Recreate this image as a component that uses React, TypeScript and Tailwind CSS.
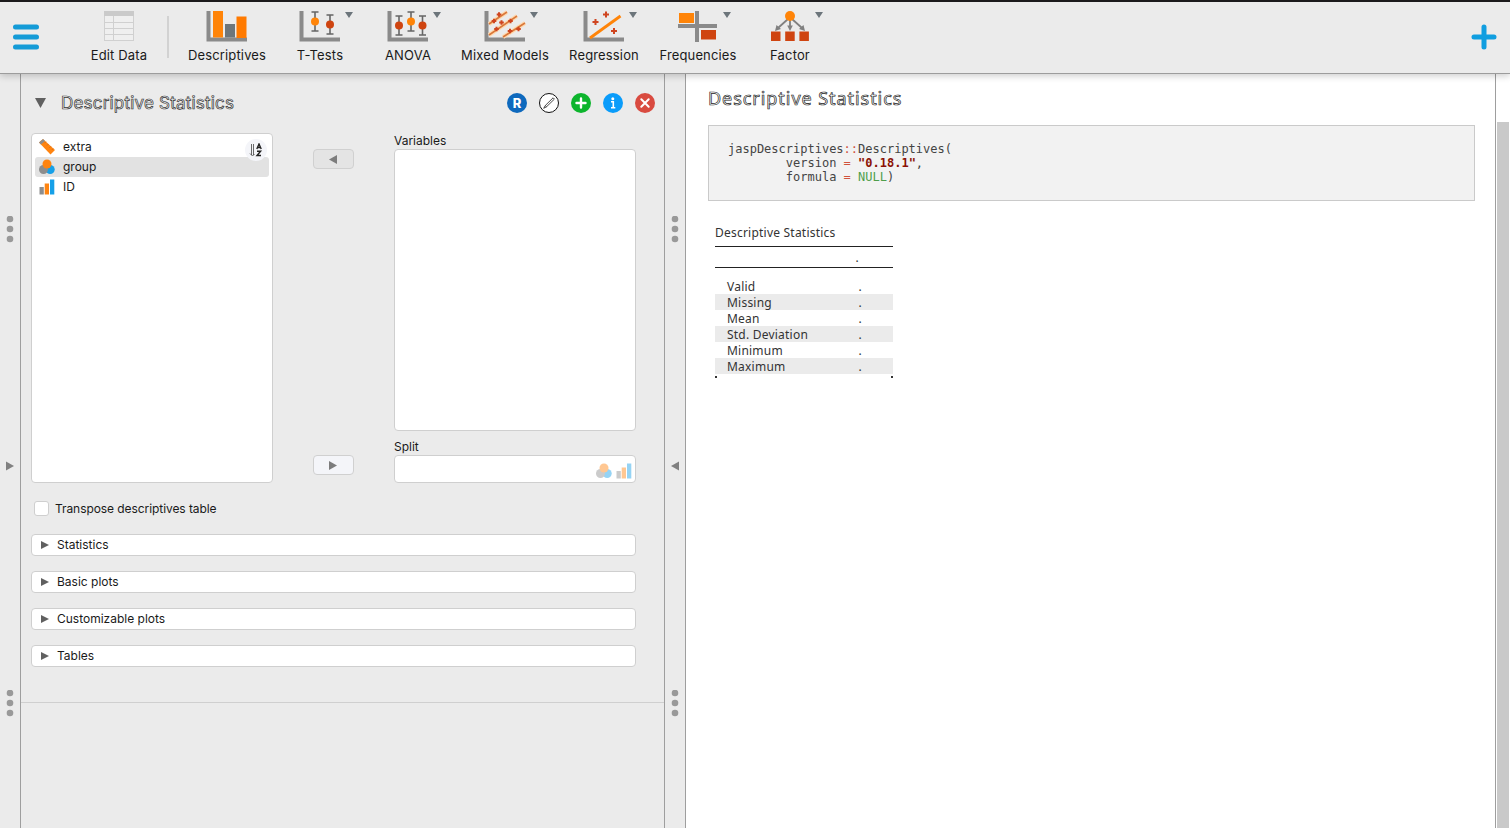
import React, { ReactNode } from "react";

const AXES = "M1.5 0V28.5H40";

function Axes({ children }: { children?: ReactNode }) {
  return (
    <svg width="40" height="31" viewBox="0 0 40 31" fill="none" className="overflow-visible">
      <path d={AXES} stroke="#8a8a8a" strokeWidth="4" />
      {children}
    </svg>
  );
}

function Whisker({ x, y, color }: { x: number; y: number; color: string }) {
  return (
    <g>
      <path d={`M${x} ${y - 9.5}V${y + 9.5}M${x - 3.5} ${y - 9.5}h7M${x - 3.5} ${y + 9.5}h7`} stroke="#666" strokeWidth="1.6" />
      <circle cx={x} cy={y} r="4" fill={color} />
    </g>
  );
}

function Plus({ x, y, r = 3 }: { x: number; y: number; r?: number }) {
  return <path d={`M${x - r} ${y}h${2 * r}M${x} ${y - r}v${2 * r}`} stroke="#cf4520" strokeWidth="2" />;
}

const RED = "#cf4410";
const ORANGE = "#ff8408";

function DescriptivesIcon() {
  return (
    <Axes>
      <rect x="6" y="0" width="10" height="26.5" fill={ORANGE} />
      <rect x="18" y="13" width="10" height="13.5" fill="#6d767b" />
      <rect x="29.5" y="5.5" width="10" height="21.5" fill="#ff7a00" />
    </Axes>
  );
}
function TTestIcon() {
  return (
    <Axes>
      <Whisker x={15} y={10.5} color={ORANGE} />
      <Whisker x={30} y={13.5} color={RED} />
    </Axes>
  );
}
function AnovaIcon() {
  return (
    <Axes>
      <Whisker x={11} y={14.5} color={RED} />
      <Whisker x={23} y={10.5} color={ORANGE} />
      <Whisker x={34.5} y={14.5} color={RED} />
    </Axes>
  );
}
function MixedIcon() {
  return (
    <Axes>
      <path d="M4 13L22 1M4 24L32 5M18 26L40 12" stroke="#ffd9b0" strokeWidth="4" />
      <path d="M4 13L22 1M4 24L32 5M18 26L40 12" stroke="#d9783a" strokeWidth="1.6" />
      <Plus x={14} y={3.5} r={2.3} />
      <Plus x={9} y={10} r={2.3} />
      <Plus x={16.5} y={11.5} r={2.3} />
      <Plus x={25.500} y={10} r={2.3} />
      <Plus x={11.5} y={18} r={2.3} />
      <Plus x={25} y={20} r={2.3} />
      <Plus x={33.500} y={18} r={2.3} />
    </Axes>
  );
}
function RegressionIcon() {
  return (
    <Axes>
      <path d="M6 27L36.500 5" stroke={ORANGE} strokeWidth="2.8" />
      <Plus x={11.500} y={11} />
      <Plus x={22} y={3.5} />
      <Plus x={30} y={20} />
    </Axes>
  );
}
function FrequenciesIcon() {
  return (
    <svg width="40" height="31" viewBox="0 0 40 31">
      <path d="M0 13h39v4H0zM17 0h4v31h-4z" fill="#8a8a8a" />
      <rect x="1" y="2" width="15" height="10" fill={ORANGE} />
      <rect x="23" y="19" width="15" height="9.500" fill={RED} />
    </svg>
  );
}
function FactorIcon() {
  return (
    <svg width="40" height="31" viewBox="0 0 40 31">
      <path d="M18 8L8 17M20 8v9M22 8l10 9" stroke="#808080" strokeWidth="1.8" />
      <path d="M5 20l1.500-6 4.500 4zM17.200 14.500h5.600L20 20zM35 20l-6-2 4.500-4z" fill="#808080" />
      <circle cx="20" cy="5" r="5" fill={ORANGE} />
      <path d="M1 20.500h9.500v9.500H1zM15.200 20.500h9.500v9.500h-9.500zM29.400 20.500h9.500v9.500h-9.500z" fill={RED} />
    </svg>
  );
}
function EditDataIcon() {
  return (
    <svg width="30" height="31" viewBox="0 0 30 31" fill="none">
      <rect x="0.5" y="0.5" width="29" height="29" fill="#efefef" stroke="#d0d0d0" />
      <rect width="30" height="5" fill="#cacaca" />
      <path d="M9.500 5v25M0 11.500h30M0 17.500h30M0 23.500h30" stroke="#d0d0d0" />
    </svg>
  );
}

function ToolItem({ icon, label, box, menu = true }: { icon: ReactNode; label: string; box: string; menu?: boolean }) {
  return (
    <div className={`relative flex shrink-0 flex-col items-center pt-[9px] ${box}`}>
      {icon}
      <span className="mt-[5px] text-[13px] leading-4 tracking-[0.15px] whitespace-nowrap">{label}</span>
      {menu && (
        <svg className="absolute top-[10px] left-[calc(50%+25px)]" width="8" height="6" viewBox="0 0 8 6">
          <path d="M0 0h8L4 6z" fill="#6c757b" />
        </svg>
      )}
    </div>
  );
}

function Toolbar() {
  return (
    <header className="relative z-10 flex h-[74px] shrink-0 border-t-2 border-b border-t-[#1b1a1c] border-b-[#9c9c9c] bg-[#ebebeb] shadow-[0_2px_7px_rgba(0,0,0,0.2)]">
      <svg className="mt-[22px] ml-[13px] shrink-0" width="26" height="26" viewBox="0 0 26 26">
        <path d="M2.500 3h21M2.500 13h21M2.500 23h21" stroke="#149bd7" strokeWidth="5" strokeLinecap="round" />
      </svg>
      <ToolItem icon={<EditDataIcon />} label="Edit Data" box="ml-10 w-20" menu={false} />
      <div className="mt-[14px] ml-2 h-[42px] w-[2px] shrink-0 bg-[#d2d2d2]" />
      <ToolItem icon={<DescriptivesIcon />} label="Descriptives" box="ml-[13px] w-[90px]" menu={false} />
      <ToolItem icon={<TTestIcon />} label="T-Tests" box="ml-2 w-20" />
      <ToolItem icon={<AnovaIcon />} label="ANOVA" box="ml-2 w-20" />
      <ToolItem icon={<MixedIcon />} label="Mixed Models" box="ml-[9px] w-24" />
      <ToolItem icon={<RegressionIcon />} label="Regression" box="ml-[9px] w-[84px]" />
      <ToolItem icon={<FrequenciesIcon />} label="Frequencies" box="ml-[10px] w-[84px]" />
      <ToolItem icon={<FactorIcon />} label="Factor" box="ml-5 w-[60px]" />
      <svg className="mt-[22px] mr-[13px] ml-auto shrink-0" width="26" height="26" viewBox="0 0 26 26">
        <path d="M3 13h20M13 3v20" stroke="#109ee0" strokeWidth="5" strokeLinecap="round" />
      </svg>
    </header>
  );
}

function Dots() {
  return (
    <svg className="shrink-0" width="8" height="27" viewBox="0 0 8 27" fill="#999">
      <circle cx="4" cy="3" r="3.300" />
      <circle cx="4" cy="13" r="3.300" />
      <circle cx="4" cy="23" r="3.300" />
    </svg>
  );
}

function Splitter({ left }: { left?: boolean }) {
  return (
    <div className="flex w-[21px] shrink-0 flex-col items-center border-r border-[#9e9e9e] bg-[#ebebeb] pt-[142px]">
      <Dots />
      <svg className="mt-[218px] mb-[219px] shrink-0" width="8" height="10" viewBox="0 0 8 10">
        <path d={left ? "M8 0.500v9L0 5z" : "M0 0.500v9L8 5z"} fill="#808080" />
      </svg>
      <Dots />
    </div>
  );
}

function Scale() {
  return (
    <svg width="16" height="16" viewBox="0 0 16 16">
      <path d="M0 3.500L4 0l12 11-4.500 4.500z" fill="#ff8410" />
      <path d="M0 3.500L4 0l2 2-4 3.500z" fill="#8d8d8d" />
      <path d="M7 2.700L5.500 4.200M9.500 5L8 6.500M12 7.300l-1.500 1.500M14.300 9.500L12.800 11" stroke="#c66a20" strokeWidth="0.800" />
    </svg>
  );
}
function Nominal() {
  return (
    <svg width="16" height="16" viewBox="0 0 16 16">
      <circle cx="11.200" cy="10.500" r="4.500" fill="#16a0e8" />
      <circle cx="4.500" cy="10.500" r="4.500" fill="#8d8d8d" />
      <circle cx="8" cy="5" r="4.500" fill="#ff8410" />
    </svg>
  );
}
function Ordinal() {
  return (
    <svg width="16" height="16" viewBox="0 0 16 16">
      <path d="M0.500 8h4.300v7.500H0.500z" fill="#8d8d8d" />
      <path d="M5.700 4.500h4.300v11H5.700z" fill="#ff8410" />
      <path d="M11 0.500h4.300v15H11z" fill="#16a0e8" />
    </svg>
  );
}

function Variable({ icon, name, selected }: { icon: ReactNode; name: string; selected?: boolean }) {
  return (
    <div className={`flex h-5 items-center rounded-[3px] pl-1 ${selected ? "bg-[#e2e2e2]" : ""}`}>
      {icon}
      <span className="ml-2 text-[12px] leading-5">{name}</span>
    </div>
  );
}

function MoveButton({ left }: { left?: boolean }) {
  return (
    <div className={`flex h-5 w-[41px] items-center justify-center rounded-[4px] border border-[#d0d0d0] ${left ? "bg-[#e4e4e4]" : "bg-[#f4f5f9]"}`}>
      <svg width="9" height="9" viewBox="0 0 9 9">
        <path d={left ? "M8 0v9L0 4.500z" : "M0 0v9l8-4.500z"} fill="#7c7c7c" />
      </svg>
    </div>
  );
}

function HeaderButtons() {
  return (
    <div className="ml-auto flex gap-3">
      <svg width="20" height="20" viewBox="0 0 20 20">
        <circle cx="10" cy="10" r="10" fill="#0e69bd" />
        <text x="10" y="14.700" textAnchor="middle" fill="#fff" className="font-['Inter'] text-[13px] font-extrabold">R</text>
      </svg>
      <svg width="20" height="20" viewBox="0 0 20 20" fill="none">
        <circle cx="10" cy="10" r="9.500" fill="#fff" stroke="#111" />
        <path d="M4.700 15.300l1.600-2.800 1.300 1.200zM6.300 12.500l7.800-7.700 1.300 1.300-7.800 7.600" stroke="#333" strokeWidth="0.900" />
      </svg>
      <svg width="20" height="20" viewBox="0 0 20 20">
        <circle cx="10" cy="10" r="10" fill="#0db52d" />
        <path d="M5.500 10h9M10 5.500v9" stroke="#fff" strokeWidth="2.400" strokeLinecap="round" />
      </svg>
      <svg width="20" height="20" viewBox="0 0 20 20">
        <circle cx="10" cy="10" r="10" fill="#0a9cfa" />
        <circle cx="9.800" cy="5.700" r="1.500" fill="#fff" />
        <path d="M8 8.800h2.300V14.500M8 14.700h4.300" stroke="#fff" strokeWidth="1.600" fill="none" />
      </svg>
      <svg width="20" height="20" viewBox="0 0 20 20">
        <circle cx="10" cy="10" r="10" fill="#d94b40" />
        <path d="M6.300 6.300l7.400 7.400M13.700 6.300l-7.400 7.400" stroke="#fff" strokeWidth="2" strokeLinecap="round" />
      </svg>
    </div>
  );
}

function FormPanel() {
  return (
    <section className="flex w-[644px] shrink-0 flex-col border-r border-[#9e9e9e] bg-[#ebebeb]">
      <div className="flex h-[629px] shrink-0 flex-col border-b border-[#cfcfcf] pl-[10px]">
        <div className="mt-[19px] flex h-5 items-center pr-[9px]">
          <svg className="ml-1 shrink-0" width="12" height="10" viewBox="0 0 12 10">
            <path d="M0 0h11L5.500 10z" fill="#606060" />
          </svg>
          <h1 className="ml-[14px] text-[17px] leading-5 tracking-[0.2px] whitespace-nowrap text-[#f5f5f5] [-webkit-text-stroke:0.700px_#333]">Descriptive Statistics</h1>
          <HeaderButtons />
        </div>
        <div className="mt-5 flex h-[350px]">
          <div className="relative w-[242px] rounded-[4px] border border-[#cfcfcf] bg-white px-[3px] pt-[3px]">
            <Variable icon={<Scale />} name="extra" />
            <Variable icon={<Nominal />} name="group" selected />
            <Variable icon={<Ordinal />} name="ID" />
            <div className="absolute top-[5px] right-[5px] flex size-[22px] items-center justify-center rounded-full bg-[#f4f5f9]">
              <svg width="14" height="14" viewBox="0 0 14 14" fill="none">
                <path d="M2.500 1v11M4.500 1v11M1 10.500l2.500 2.500 2-2" stroke="#444" strokeWidth="0.800" />
                <path d="M7.800 6L10 1l2.200 5M8.500 4.500h3M8 8.300h3.600L8 12.500h4" stroke="#222" strokeWidth="1.400" />
              </svg>
            </div>
          </div>
          <div className="flex w-[121px] flex-col items-center pt-4">
            <MoveButton left />
            <div className="h-[286px]" />
            <MoveButton />
          </div>
          <div className="w-[242px] text-[12px] leading-4">
            <div>Variables</div>
            <div className="h-[282px] rounded-[4px] border border-[#cfcfcf] bg-white" />
            <div className="mt-2">Split</div>
            <div className="flex h-7 items-end justify-end gap-1 rounded-[4px] border border-[#cfcfcf] bg-white pr-[3px] pb-[3px]">
              <span className="opacity-45"><Nominal /></span>
              <span className="opacity-45"><Ordinal /></span>
            </div>
          </div>
        </div>
        <label className="mt-[18px] ml-[3px] flex h-[15px] items-center text-[12px]">
          <span className="size-[15px] rounded-[3px] border border-[#cfcfcf] bg-white" />
          <span className="ml-[6px] leading-[15px] tracking-[-0.07px]">Transpose descriptives table</span>
        </label>
        <div className="mt-[18px] flex w-[605px] flex-col gap-[15px]">
          {["Statistics", "Basic plots", "Customizable plots", "Tables"].map((name) => (
            <div key={name} className="flex h-[22px] items-center rounded-[4px] border border-[#cfcfcf] bg-white pl-[9px] text-[12px]">
              <svg width="8" height="8" viewBox="0 0 8 8">
                <path d="M0 0v8l8-4z" fill="#606060" />
              </svg>
              <span className="ml-2 leading-5">{name}</span>
            </div>
          ))}
        </div>
      </div>
    </section>
  );
}

function Results() {
  const rows = ["Valid", "Missing", "Mean", "Std. Deviation", "Minimum", "Maximum"];
  return (
    <main className="min-w-0 flex-1 bg-white pt-3 pr-5 pl-[22px] font-['Noto_Sans',sans-serif]">
      <h2 className="h-6 text-[18px] leading-6 tracking-[0.95px] whitespace-nowrap text-white [-webkit-text-stroke:0.700px_#222]">Descriptive Statistics</h2>
      <pre className="mt-[15px] h-[76px] border border-[#cacaca] bg-[#f2f2f2] pt-4 pl-[19px] font-['DejaVu_Sans_Mono',monospace] text-[12px] leading-[14px] text-[#444]">
        {"jaspDescriptives"}<span className="text-[#d0523c]">::</span>{"Descriptives(\n        version "}
        <span className="text-[#d0523c]">=</span> <span className="font-bold text-[#8b1105]">"0.18.1"</span>{",\n        formula "}
        <span className="text-[#d0523c]">=</span> <span className="text-[#4f9e4b]">NULL</span>)
      </pre>
      <div className="mt-[23px] ml-[7px] w-[178px] text-[12px] leading-[18px] tracking-[0.22px] text-[#333]">
        <div className="h-[22px] whitespace-nowrap">Descriptive Statistics</div>
        <div className="h-[22px] border-y border-[#222] pr-[34px] text-right leading-[22px]">.</div>
        <div className="h-[10px]" />
        {rows.map((row, i) => (
          <div key={row} className={`flex h-4 justify-between pr-[31px] pl-3 ${i % 2 ? "bg-[#ebebeb]" : ""}`}>
            <span>{row}</span>
            <span>.</span>
          </div>
        ))}
        <div className="mt-[2px] h-[2px] border-x-2 border-[#333]" />
      </div>
    </main>
  );
}

export default function App() {
  return (
    <div className="flex h-[828px] w-[1510px] flex-col overflow-hidden bg-white font-['Inter',sans-serif] text-[#1a1a1a]">
      <Toolbar />
      <div className="flex min-h-0 flex-1">
        <Splitter />
        <FormPanel />
        <Splitter left />
        <Results />
        <div className="w-[15px] shrink-0 border-l border-[#9e9e9e] bg-white pt-[48px] pr-[1px] pl-[1px]">
          <div className="h-full bg-[#c9c9c9]" />
        </div>
      </div>
    </div>
  );
}
